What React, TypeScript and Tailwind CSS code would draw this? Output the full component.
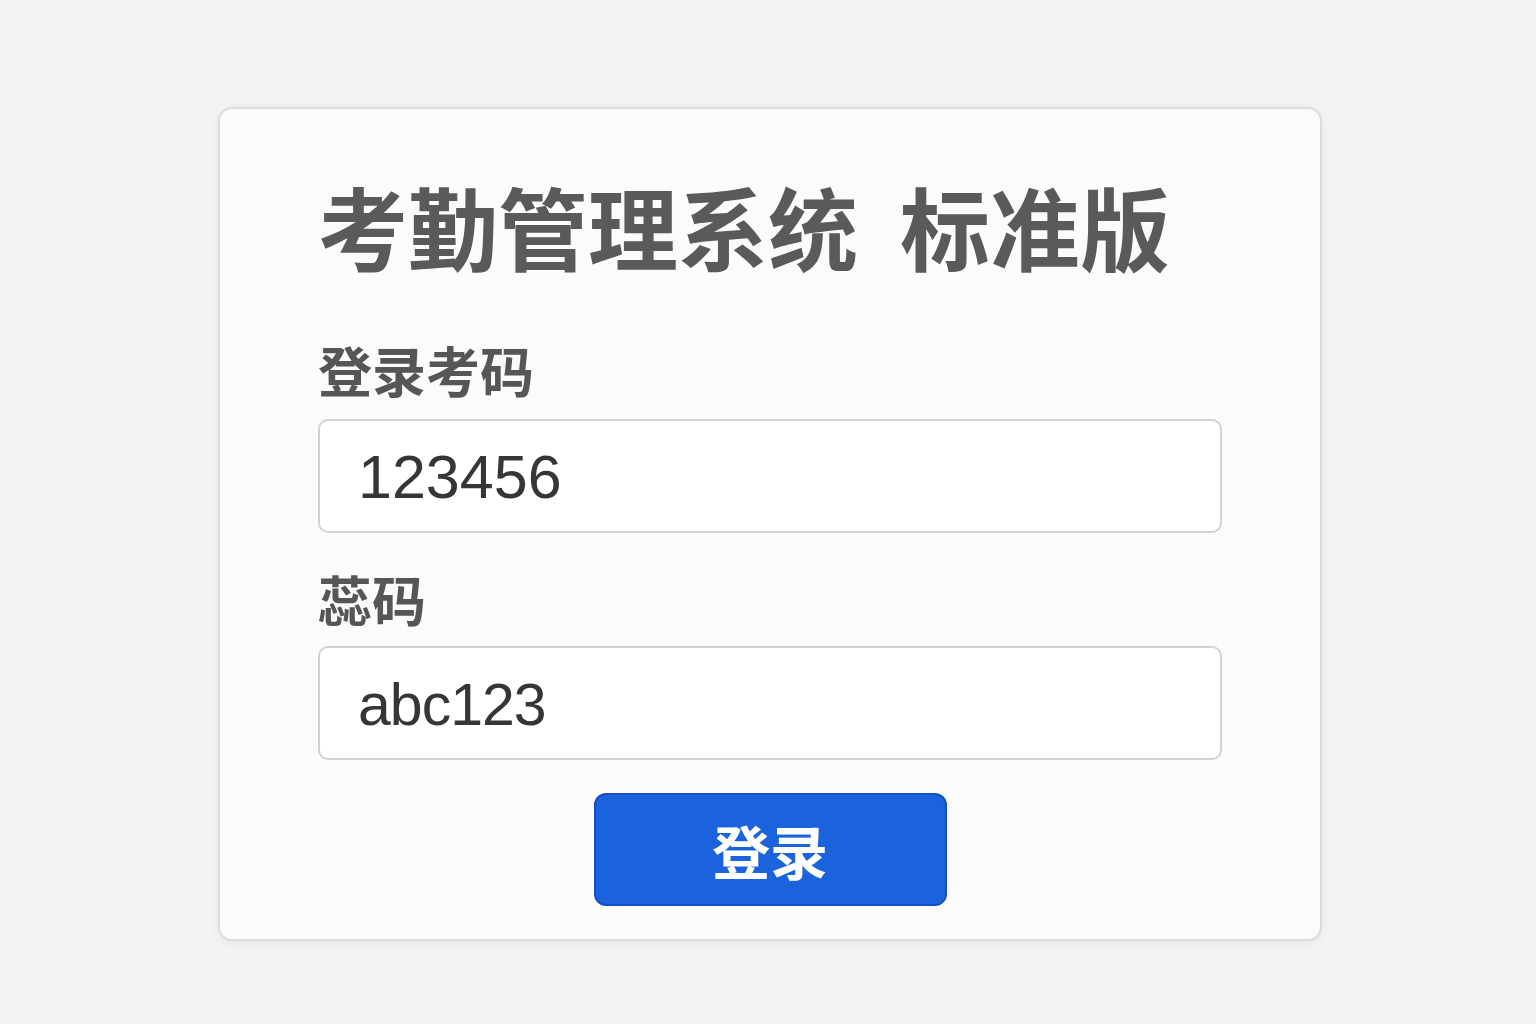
export default function App() {
  return (
    <div className="min-h-screen w-full bg-[#f3f3f2] flex justify-center pt-[107px] pl-[4px] font-['Noto_Sans_CJK_SC',sans-serif]">
      <div className="w-[1104px] h-[834px] bg-[#fbfbfa] border-2 border-[#dcdcdb] rounded-[14px] shadow-[0_2px_10px_rgba(0,0,0,0.06)] px-[98px] pt-[71px] flex flex-col">
        <h1 className="text-[90px] leading-[90px] font-bold text-[#595b5b] whitespace-nowrap">
          考勤管理系统<span className="inline-block w-[42px]"></span>标准版
        </h1>

        <label className="mt-[73px] text-[54px] leading-[54px] font-bold text-[#555757]">登录考码</label>
        <div className="mt-[22px] h-[114px] bg-white border-2 border-[#d2d2d2] rounded-[10px] flex items-center px-[38px] pt-[4px]">
          <span className="font-['Liberation_Sans',Arial,sans-serif] text-[61px] text-[#363636]">123456</span>
        </div>

        <label className="mt-[39px] text-[54px] leading-[54px] font-bold text-[#555757]">蕊码</label>
        <div className="mt-[20px] h-[114px] bg-white border-2 border-[#d2d2d2] rounded-[10px] flex items-center px-[38px] pt-[4px]">
          <span className="font-['Liberation_Sans',Arial,sans-serif] text-[59px] tracking-[-1px] text-[#363636]">abc123</span>
        </div>

        <div className="mt-[33px] flex justify-center">
          <button className="w-[353px] h-[113px] bg-[#1b63dc] border-2 border-[#1450c4] rounded-[12px] text-white text-[58px] leading-[58px] font-bold flex items-center justify-center">
            登录
          </button>
        </div>
      </div>
    </div>
  );
}
